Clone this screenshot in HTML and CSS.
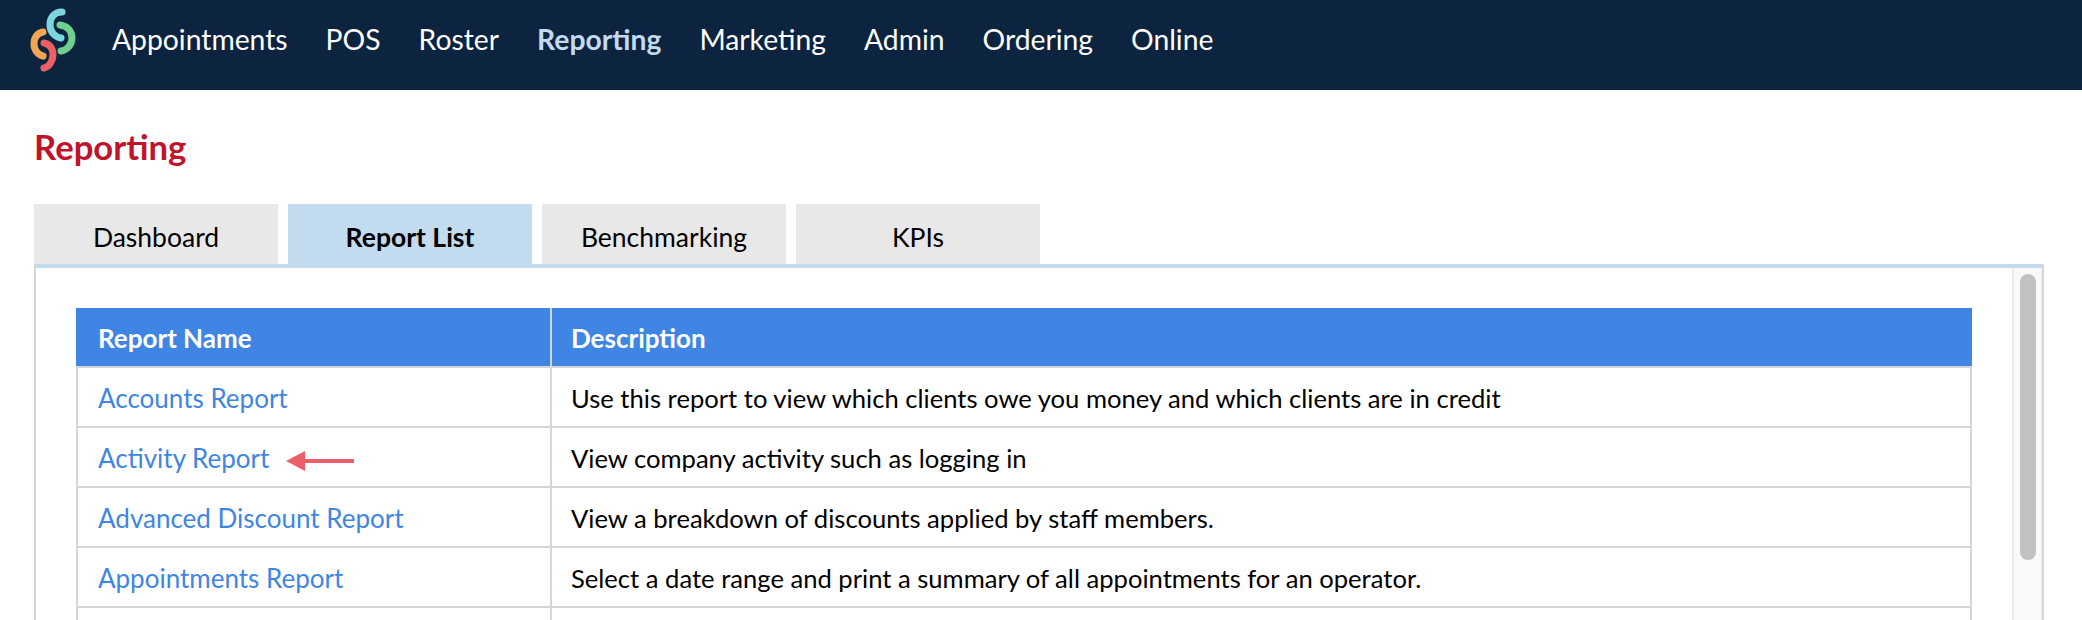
FILE: index.html
```html
<!DOCTYPE html>
<html lang="en">
<head>
<meta charset="utf-8">
<title>Reporting</title>
<link rel="stylesheet" href="styles.css">
</head>
<body>
<header class="topbar">
  <svg class="logo" width="48" height="64" viewBox="0 0 48 64" fill="none" stroke-width="7" stroke-linecap="round">
    <path stroke="#f2a654" d="M13 24C7 25 4 30 4 36C4 42 8 47 13 48"/>
    <path stroke="#ec5f62" d="M14 35C20 36 23 41 23 47C23 53 19 59 14 60"/>
    <path stroke="#7dd5e0" d="M32 4C24 4 20 10 20 17C20 24 25 29 31 30"/>
    <path stroke="#6fcf8e" d="M30 17C37 18 42 23 42 30C42 37 37 42 31 43"/>
  </svg>
  <nav class="mainnav">
    <a>Appointments</a><a>POS</a><a>Roster</a><a class="on">Reporting</a><a>Marketing</a><a>Admin</a><a>Ordering</a><a>Online</a>
  </nav>
</header>
<main class="page">
  <h1 class="title">Reporting</h1>
  <div class="tabs">
    <div class="tab">Dashboard</div>
    <div class="tab active">Report List</div>
    <div class="tab">Benchmarking</div>
    <div class="tab">KPIs</div>
  </div>
  <section class="panel">
    <div class="content">
      <table class="reports">
        <thead>
          <tr><th class="c1">Report Name</th><th>Description</th></tr>
        </thead>
        <tbody>
          <tr><td><a>Accounts Report</a></td><td>Use this report to view which clients owe you money and which clients are in credit</td></tr>
          <tr><td><a>Activity Report</a>
            <svg class="arrow" width="68" height="20" viewBox="0 0 68 20"><path fill="#ec5f68" d="M0 10L19 0V8H68V12H19V20Z"/></svg>
          </td><td>View company activity such as logging in</td></tr>
          <tr><td><a>Advanced Discount Report</a></td><td>View a breakdown of discounts applied by staff members.</td></tr>
          <tr><td><a>Appointments Report</a></td><td>Select a date range and print a summary of all appointments for an operator.</td></tr>
          <tr><td>&nbsp;</td><td>&nbsp;</td></tr>
        </tbody>
      </table>
    </div>
    <div class="scrollbar"><div class="thumb"></div></div>
  </section>
</main>
</body>
</html>
```
FILE: styles.css
```css
* { box-sizing: border-box; }
html, body { margin: 0; height: 100%; overflow: hidden; }
body { font-family: Lato, "Liberation Sans", sans-serif; background: #fff; color: #000; width: 2082px; height: 620px; }
.topbar { height: 90px; background: #0d2440; display: flex; align-items: center; padding-left: 30px; }
.logo { flex: none; margin-top: -10px; }
.mainnav { display: flex; gap: 38px; margin-left: 34px; font-size: 28.3px; color: #fff; margin-top: -12px; }
.mainnav .on { color: #c3dbee; font-weight: 700; }
.page { padding: 0 38px 0 34px; }
.title { margin: 0; padding-top: 37px; height: 114px; font-size: 34.7px; line-height: 40px; font-weight: 700; color: #c0142c; }
.tabs { display: flex; gap: 10px; height: 60px; }
.tab { width: 244px; background: #e8e8e8; text-align: center; font-size: 26.5px; line-height: 66px; }
.tab.active { background: #c3dbee; font-weight: 700; }
.panel { display: flex; border-top: 4px solid #c3dbee; border-left: 2px solid #d6d6d6; border-right: 2px solid #d6d6d6; height: 356px; overflow: hidden; }
.content { flex: 1; padding: 40px 0 0 40px; }
.reports { border-collapse: separate; border-spacing: 0; width: 1896px; table-layout: fixed; font-size: 26px; }
.reports th { height: 60px; background: #3f85e3; color: #fff; text-align: left; font-weight: 700; padding: 2px 20px 0 19px; border-bottom: 2px solid #d6d6d6; border-right: 2px solid #d6d6d6; }
.reports th.c1 { width: 476px; padding-left: 22px; }
.reports th:last-child { border-right: 0; }
.reports td { height: 60px; padding: 2px 20px 0 19px; border-bottom: 2px solid #d6d6d6; border-right: 2px solid #d6d6d6; font-size: 25.6px; }
.reports td:first-child { border-left: 2px solid #d6d6d6; font-size: 26px; padding-left: 20px; }
.reports td a { color: #3f85e3; }
.arrow { vertical-align: -3px; margin-left: 10px; }
.scrollbar { flex: none; width: 30px; background: #f9f9f9; border-left: 2px solid #ececec; border-right: 1px solid #ececec; padding: 6px 0 0 6px; }
.thumb { height: 286px; width: 16px; background: #c1c1c1; border-radius: 8px; }
```
